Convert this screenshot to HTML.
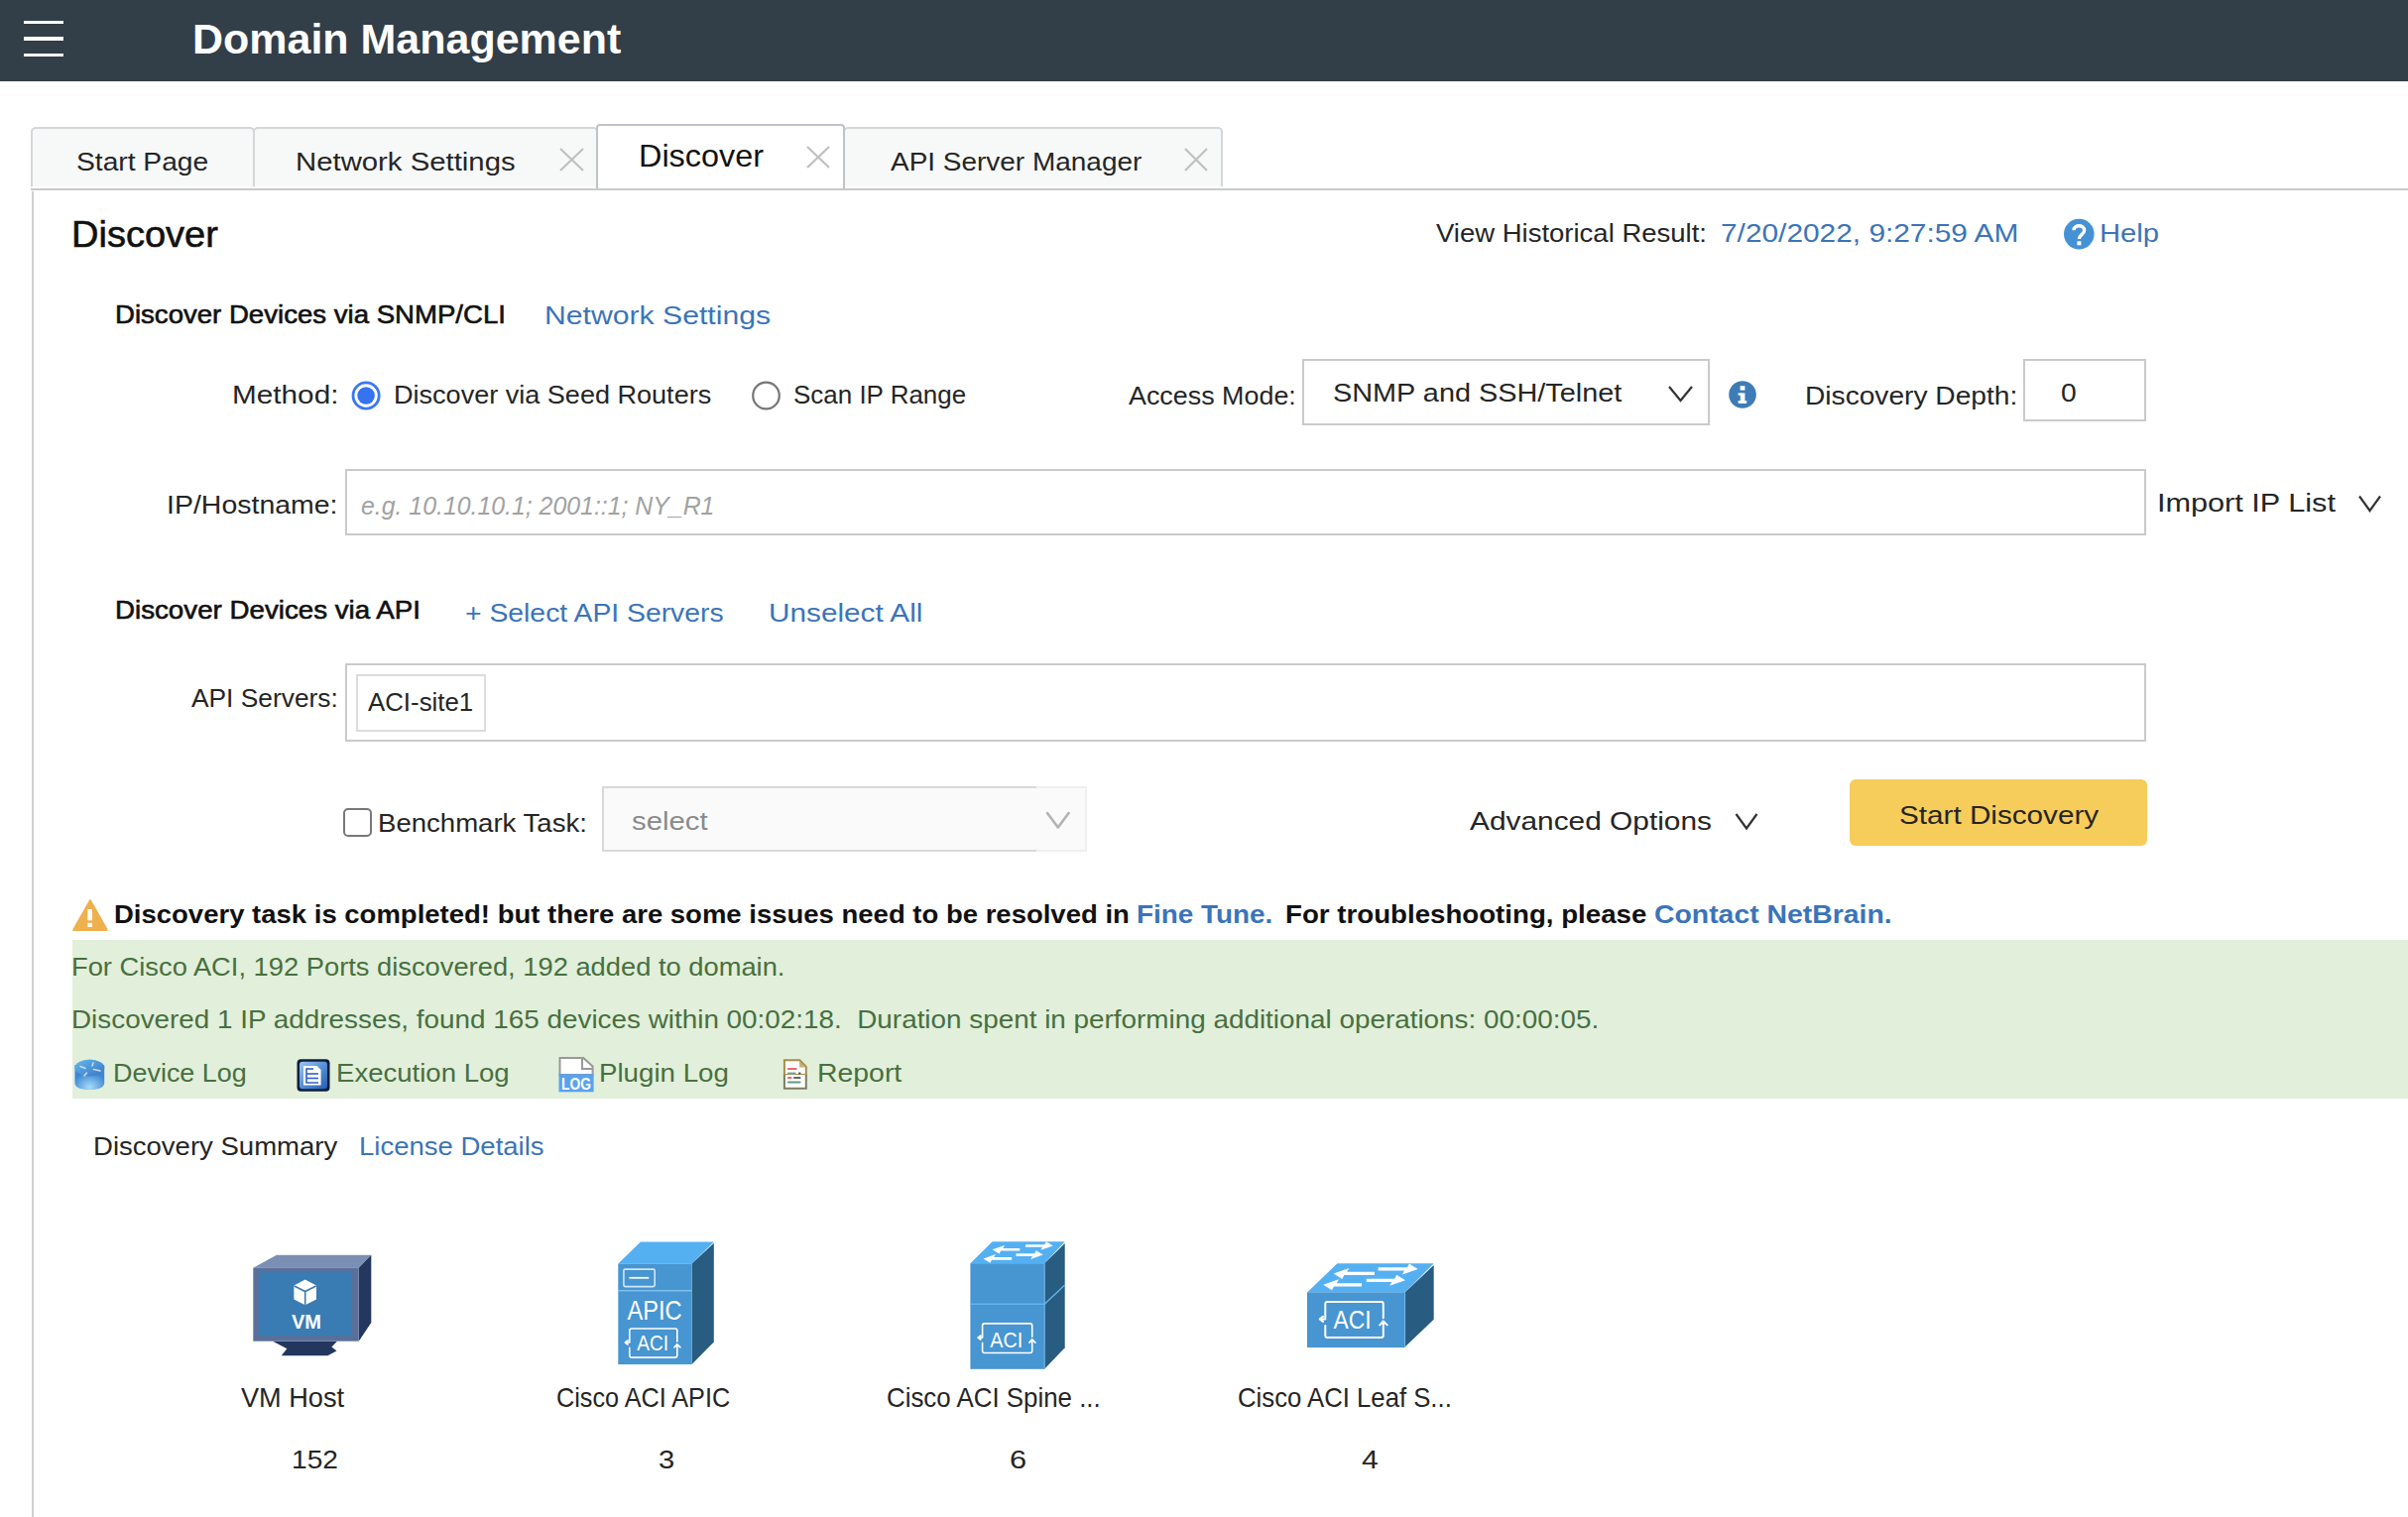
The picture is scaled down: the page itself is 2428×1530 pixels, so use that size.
<!DOCTYPE html>
<html><head><meta charset="utf-8"><style>
html,body{margin:0;padding:0;}
body{width:2428px;height:1530px;overflow:hidden;background:#fff;position:relative;font-family:"Liberation Sans",sans-serif;}
.t{position:absolute;white-space:pre;transform-origin:0 0;}
.a{position:absolute;box-sizing:border-box;}
</style></head><body>
<div class="a" style="left:0;top:0;width:2428px;height:82px;background:#323e48;"></div>
<div class="a" style="left:24px;top:20.5px;width:40px;height:3.5px;background:#fff;"></div>
<div class="a" style="left:24px;top:37px;width:40px;height:3.5px;background:#fff;"></div>
<div class="a" style="left:24px;top:53.5px;width:40px;height:3.5px;background:#fff;"></div>

<!-- tabs -->
<div class="a" style="left:31px;top:127.5px;width:226px;height:60px;background:#f7f9f8;border:2px solid #d3d7da;border-bottom:none;border-radius:5px 5px 0 0;"></div>
<div class="a" style="left:255px;top:127.5px;width:348px;height:60px;background:#f7f9f8;border:2px solid #d3d7da;border-bottom:none;border-radius:5px 5px 0 0;"></div>
<div class="a" style="left:850px;top:127.5px;width:383px;height:60px;background:#f7f9f8;border:2px solid #d3d7da;border-bottom:none;border-radius:5px 5px 0 0;"></div>
<div class="a" style="left:601px;top:125px;width:251px;height:65px;background:#fff;border:2px solid #bfc3c7;border-bottom:none;border-radius:4px 4px 0 0;"></div>
<div class="a" style="left:31px;top:189.5px;width:2397px;height:2.5px;background:#c9c9c9;"></div>
<div class="a" style="left:31.5px;top:193px;width:2px;height:1337px;background:#cfd1d3;"></div>

<!-- inputs -->
<div class="a" style="left:1313px;top:362px;width:411px;height:67px;border:2px solid #cacaca;"></div>
<div class="a" style="left:2040px;top:362px;width:124px;height:63px;border:2px solid #cacaca;"></div>
<div class="a" style="left:348px;top:473px;width:1816px;height:67px;border:2px solid #cacaca;"></div>
<div class="a" style="left:348px;top:669px;width:1816px;height:79px;border:2px solid #cacaca;"></div>
<div class="a" style="left:359px;top:680px;width:131px;height:58px;border:2px solid #dcdcdc;"></div>
<div class="a" style="left:607px;top:793px;width:489px;height:66px;border:2px solid #efefef;background:#fafafa;"></div>
<div class="a" style="left:607px;top:793px;width:438px;height:66px;border:2px solid #d9d9d9;border-right:none;"></div>
<div class="a" style="left:346px;top:815px;width:29px;height:29px;border:2.2px solid #787878;border-radius:5px;background:#fff;"></div>
<div class="a" style="left:1865px;top:786px;width:300px;height:67px;background:#f6cd5a;border-radius:6px;"></div>

<!-- green band -->
<div class="a" style="left:73px;top:948px;width:2355px;height:160px;background:#e2efdb;"></div>

<svg class="a" style="left:0;top:0;" width="2428" height="1530" viewBox="0 0 2428 1530">
  <!-- close X -->
  <g stroke="#c0c0c0" stroke-width="2.3" fill="none">
    <path d="M565 150 L588 172 M588 150 L565 172"/>
    <path d="M814 148 L836 169 M836 148 L814 169"/>
    <path d="M1195 150 L1217 172 M1217 150 L1195 172"/>
  </g>
  <!-- help icon -->
  <circle cx="2096.3" cy="236.1" r="15.3" fill="#4591d5"/>
  <path d="M2091 232.3 C2091 226.3 2101.6 226.3 2101.6 232.3 C2101.6 236.6 2096.4 236.6 2096.4 241" stroke="#fff" stroke-width="3.4" fill="none"/>
  <rect x="2094.4" y="243.3" width="4" height="4" fill="#fff"/>
  <!-- radios -->
  <circle cx="369.1" cy="399" r="13.1" fill="none" stroke="#3b78f0" stroke-width="2.8"/>
  <circle cx="369.1" cy="399" r="8.8" fill="#3574ee"/>
  <circle cx="772.5" cy="399" r="13.3" fill="none" stroke="#767676" stroke-width="2.2"/>
  <!-- chevrons -->
  <path d="M1683 390 L1694.5 404 L1706 390" stroke="#333" stroke-width="2.2" fill="none"/>
  <path d="M2379 500.5 L2389.5 515 L2400 500.5" stroke="#333" stroke-width="2.2" fill="none"/>
  <path d="M1056 820 L1066.8 834.5 L1077.6 820" stroke="#b3b3b3" stroke-width="2.6" fill="none" stroke-linecap="round" stroke-linejoin="round"/>
  <path d="M1750.5 821 L1761 835.5 L1771.5 821" stroke="#333" stroke-width="2.2" fill="none"/>
  <!-- info icon -->
  <circle cx="1757" cy="398" r="13.8" fill="#3d7cb7"/>
  <rect x="1754.6" y="389.2" width="4.8" height="4.4" fill="#fff"/>
  <rect x="1754.8" y="396.4" width="4.6" height="10.2" fill="#fff"/>
  <rect x="1752.6" y="404.2" width="8.6" height="2.6" fill="#fff"/>
  <rect x="1752.6" y="396.4" width="3" height="2.3" fill="#fff"/>
  <!-- warning -->
  <path d="M90.2 907.5 Q91 906.5 92 908 L108.5 937 Q109 939 107 939 L74.5 939 Q72.5 939 73.5 937 Z" fill="#eeb14d"/>
  <rect x="88.4" y="917" width="4.6" height="11.3" fill="#fff"/>
  <rect x="88.4" y="930.8" width="4.6" height="4.2" fill="#fff"/>
<defs>
<radialGradient id="cylg" cx="0.5" cy="0.9" r="0.6"><stop offset="0" stop-color="#a6dcfa"/><stop offset="1" stop-color="#3f86d2"/></radialGradient>
<linearGradient id="cyltop" x1="0" y1="0" x2="1" y2="1"><stop offset="0" stop-color="#62b8f0"/><stop offset="1" stop-color="#3a76c4"/></linearGradient>
<linearGradient id="execg" x1="0" y1="0" x2="1" y2="1"><stop offset="0" stop-color="#9cc6f0"/><stop offset="0.6" stop-color="#4a86d0"/><stop offset="1" stop-color="#2a5cb0"/></linearGradient>
</defs>
<path d="M75.5,1074 L75.5,1092 Q75.5,1099 90.4,1099 Q105.2,1099 105.2,1092 L105.2,1074 Z" fill="url(#cylg)"/>
<ellipse cx="90.4" cy="1077" rx="14.9" ry="8.6" fill="url(#cyltop)"/>
<g stroke="#c9dcea" stroke-width="1.6" stroke-linecap="round" fill="none"><path d="M81 1075.5 L86 1077.5"/><path d="M94 1072 L93 1075"/><path d="M94.5 1078.5 L101 1080"/><path d="M87.5 1082 L85 1085"/></g>
<rect x="299.5" y="1068.3" width="33" height="32.5" rx="4" fill="#0c1e3c"/>
<rect x="302" y="1070.8" width="28" height="27.5" rx="3" fill="url(#execg)"/>
<path d="M306 1075 L319.5 1075 L323.6 1079 L323.6 1094.5 L306 1094.5 Z" fill="#fff"/>
<g stroke="#2f62c0" stroke-width="1.6" fill="none"><path d="M309 1077.5 L309 1092 L321 1092"/><path d="M309 1083 L321 1083"/><path d="M309 1087.5 L321 1087.5"/><path d="M309 1078 L316 1078"/></g>
<path d="M564.5,1066.9 L588.3,1066.9 L597.6,1075.5 L597.6,1084 L564.5,1084 Z" fill="#fff" stroke="#999" stroke-width="2"/>
<path d="M587,1067 L587,1078 L597.6,1078" fill="none" stroke="#999" stroke-width="2"/>
<rect x="563.5" y="1083.3" width="35.1" height="18" fill="#5aa2ec"/>
<text x="581" y="1099" font-family="Liberation Sans" font-weight="700" font-size="16.5" fill="#fff" text-anchor="middle" textLength="30" lengthAdjust="spacingAndGlyphs">LOG</text>
<path d="M790.9,1069.2 L806.4,1069.2 L812.8,1075.8 L812.8,1084 L790.9,1084 Z" fill="#fff" stroke="#a88d4a" stroke-width="2"/>
<path d="M790.9,1084 L790.9,1097.8 L812.8,1097.8 L812.8,1084" fill="#fff" stroke="#7e7c64" stroke-width="2"/>
<path d="M806,1070 L806,1076.5 L812,1076.5 Z" fill="#c9b078"/>
<g stroke-width="2.2" stroke-linecap="round"><path d="M795 1078 L802.5 1078" stroke="#e86868"/><path d="M795 1082.5 L801.5 1082.5" stroke="#7aa89a"/><path d="M806 1082.5 L806.5 1082.5" stroke="#555"/><path d="M795 1087 L797.5 1087" stroke="#e86868"/><path d="M801 1087 L806.5 1087" stroke="#666"/><path d="M795 1091.5 L806.5 1091.5" stroke="#5b9a86"/></g>
<polygon points="255.3,1278.7 279.0,1265.7 374.3,1265.7 361.7,1278.7" fill="#7b8fb4" />
<polygon points="361.7,1278.7 374.3,1265.7 374.3,1334.1 361.7,1352.7" fill="#24375f" />
<polygon points="275.0,1352.7 340.0,1352.7 334.4,1358.6 339.5,1362.6 330.4,1367.3 283.8,1367.3 289.3,1360.2" fill="#22365e" />
<rect x="255.3" y="1278.7" width="106.4" height="74" fill="#5a6f9a"/>
<rect x="260.8" y="1283.1" width="93.8" height="64.1" fill="#397bb3"/>
<polygon points="307.7,1290.6 319.0,1296.5 319.0,1310.5 307.7,1316.3 296.4,1310.5 296.4,1296.5" fill="#fff" />
<path d="M296.7,1297 L307.7,1302.5 L318.7,1297 M307.7,1302.5 L307.7,1316" stroke="#397bb3" stroke-width="1.6" fill="none"/>
<text x="309" y="1340.4" font-family="Liberation Sans" font-weight="700" font-size="20.6" fill="#fff" text-anchor="middle" textLength="30" lengthAdjust="spacingAndGlyphs">VM</text>
<polygon points="623.3,1274.5 645.9,1252.4 719.8,1252.4 697.6,1274.5" fill="#55b0f2" />
<polygon points="697.6,1274.5 719.8,1253.8 719.8,1353.4 697.6,1376.1" fill="#285c80" />
<rect x="623.3" y="1274.5" width="74.3" height="101.6" fill="#4795d1"/>
<rect x="628.9" y="1280.1" width="31.3" height="17.5" rx="1.5" fill="none" stroke="#cfe6f7" stroke-width="1.6"/>
<path d="M634.4 1288.8 L654.2 1288.8" stroke="#fff" stroke-width="1.8"/>
<path d="M623.3 1301.8 L697.6 1301.8" stroke="#7cc0ee" stroke-width="1.4"/>
<text x="660" y="1331.3" font-family="Liberation Sans" font-size="27.6" fill="#fff" text-anchor="middle" textLength="55" lengthAdjust="spacingAndGlyphs">APIC</text>
<path d="M634.8,1350.5 L634.8,1342.0 Q634.8,1340.0 636.8,1340.0 L680.8,1340.0 Q682.8,1340.0 682.8,1342.0 L682.8,1353.1 M682.8,1359.2 L682.8,1367.1 Q682.8,1369.1 680.8,1369.1 L636.8,1369.1 Q634.8,1369.1 634.8,1367.1 L634.8,1359.2 M634.8,1350.5 L634.8,1354.0 L630.3,1354.0 M633.1,1351.9 L630.3,1354.0 L633.1,1356.1 M682.8,1359.2 L682.8,1355.7 M680.0,1358.9 L682.8,1355.7 L685.9,1358.9" stroke="#fff" stroke-width="1.6" fill="none" stroke-linecap="round" stroke-linejoin="round"/>
<text x="658.1" y="1362.2" font-family="Liberation Sans" font-size="21.5" fill="#fff" text-anchor="middle" textLength="31.8" lengthAdjust="spacingAndGlyphs">ACI</text>
<polygon points="978.4,1274.2 1000.6,1252.2 1073.7,1252.2 1053.2,1274.2" fill="#55b0f2" />
<polygon points="1053.2,1274.2 1073.7,1254.1 1073.7,1359.2 1053.2,1380.8" fill="#285c80" />
<rect x="978.4" y="1274.2" width="74.8" height="106.6" fill="#4795d1"/>
<path d="M978.4 1315.3 L1053.2 1315.3 L1073.7 1296.1" stroke="#62b4ee" stroke-width="1.4" fill="none"/>
<path d="M1053.2 1274.2 L1053.2 1380.8" stroke="#6cb8ee" stroke-width="1" fill="none"/>
<polygon points="1000.6,1260.3 1013.0,1256.0 1011.3,1259.0 1028.3,1259.0 1028.3,1261.6 1009.1,1261.6 1007.5,1264.6" fill="#fff" />
<polygon points="1061.8,1256.5 1054.9,1252.2 1053.3,1255.2 1034.0,1255.2 1034.0,1257.8 1051.1,1257.8 1049.4,1260.8" fill="#fff" />
<polygon points="991.5,1269.4 1003.9,1265.1 1002.2,1268.1 1020.2,1268.1 1020.2,1270.7 1000.0,1270.7 998.4,1273.7" fill="#fff" />
<polygon points="1051.7,1265.6 1044.8,1261.3 1043.2,1264.3 1024.5,1264.3 1024.5,1266.9 1041.0,1266.9 1039.3,1269.9" fill="#fff" />
<path d="M990.6,1345.6 L990.6,1336.9 Q990.6,1334.9 992.6,1334.9 L1038.7,1334.9 Q1040.7,1334.9 1040.7,1336.9 L1040.7,1348.2 M1040.7,1354.4 L1040.7,1362.5 Q1040.7,1364.5 1038.7,1364.5 L992.6,1364.5 Q990.6,1364.5 990.6,1362.5 L990.6,1354.4 M990.6,1345.6 L990.6,1349.1 L986.0,1349.1 M988.8,1347.0 L986.0,1349.1 L988.8,1351.2 M1040.7,1354.4 L1040.7,1350.9 M1037.9,1354.1 L1040.7,1350.9 L1043.9,1354.1" stroke="#fff" stroke-width="1.6" fill="none" stroke-linecap="round" stroke-linejoin="round"/>
<text x="1014.7" y="1358.8" font-family="Liberation Sans" font-size="22.2" fill="#fff" text-anchor="middle" textLength="33" lengthAdjust="spacingAndGlyphs">ACI</text>
<polygon points="1318.0,1303.4 1348.4,1274.3 1445.7,1274.3 1416.6,1303.4" fill="#55b0f2" />
<polygon points="1416.6,1303.4 1445.7,1276.0 1445.7,1330.8 1416.6,1358.5" fill="#285c80" />
<rect x="1318" y="1303.4" width="98.6" height="55.7" fill="#4795d1"/>
<path d="M1416.6 1303.4 L1416.6 1359" stroke="#6cb8ee" stroke-width="1" fill="none"/>
<polygon points="1344.6,1284.4 1360.3,1278.9 1358.2,1282.8 1386.0,1282.8 1386.0,1286.0 1355.4,1286.0 1353.3,1289.9" fill="#fff" />
<polygon points="1429.7,1279.9 1421.0,1274.4 1418.9,1278.3 1389.6,1278.3 1389.6,1281.5 1416.0,1281.5 1414.0,1285.4" fill="#fff" />
<polygon points="1334.2,1295.8 1350.0,1290.3 1347.9,1294.2 1373.0,1294.2 1373.0,1297.4 1345.0,1297.4 1343.0,1301.3" fill="#fff" />
<polygon points="1417.0,1291.3 1408.2,1285.8 1406.2,1289.7 1377.8,1289.7 1377.8,1292.9 1403.3,1292.9 1401.2,1296.8" fill="#fff" />
<path d="M1336.3,1326.1 L1336.3,1315.1 Q1336.3,1313.1 1338.3,1313.1 L1392.8,1313.1 Q1394.8,1313.1 1394.8,1315.1 L1394.8,1329.3 M1394.8,1336.9 L1394.8,1347.1 Q1394.8,1349.1 1392.8,1349.1 L1338.3,1349.1 Q1336.3,1349.1 1336.3,1347.1 L1336.3,1336.9 M1336.3,1326.1 L1336.3,1330.4 L1330.7,1330.4 M1334.1,1327.8 L1330.7,1330.4 L1334.1,1333.0 M1394.8,1336.9 L1394.8,1332.5 M1391.3,1336.4 L1394.8,1332.5 L1398.7,1336.4" stroke="#fff" stroke-width="2" fill="none" stroke-linecap="round" stroke-linejoin="round"/>
<text x="1363.6" y="1340.4" font-family="Liberation Sans" font-size="26.2" fill="#fff" text-anchor="middle" textLength="38" lengthAdjust="spacingAndGlyphs">ACI</text>
</svg>

<div id="t_title" class="t" style="left:194.01px;top:18.61px;font-size:42.15px;line-height:42.15px;font-weight:700;font-style:normal;color:#ffffff;transform:scaleX(1.0199);">Domain Management</div>
<div id="t_tab1" class="t" style="left:76.63px;top:149.55px;font-size:26.16px;line-height:26.16px;font-weight:400;font-style:normal;color:#252525;transform:scaleX(1.0777);">Start Page</div>
<div id="t_tab2" class="t" style="left:298.35px;top:149.55px;font-size:26.16px;line-height:26.16px;font-weight:400;font-style:normal;color:#252525;transform:scaleX(1.1210);">Network Settings</div>
<div id="t_tab3" class="t" style="left:644.41px;top:140.93px;font-size:31.98px;line-height:31.98px;font-weight:400;font-style:normal;color:#111111;transform:scaleX(1.0131);">Discover</div>
<div id="t_tab4" class="t" style="left:898.00px;top:149.65px;font-size:26.16px;line-height:26.16px;font-weight:400;font-style:normal;color:#252525;transform:scaleX(1.0689);">API Server Manager</div>
<div id="t_h1" class="t" style="left:71.66px;top:217.50px;font-size:37.79px;line-height:37.79px;font-weight:400;font-style:normal;color:#111111;transform:scaleX(1.0057);-webkit-text-stroke:0.6px #111;">Discover</div>
<div id="t_vhr" class="t" style="left:1448.00px;top:221.65px;font-size:26.16px;line-height:26.16px;font-weight:400;font-style:normal;color:#252525;transform:scaleX(1.0510);">View Historical Result:</div>
<div id="t_date" class="t" style="left:1735.01px;top:221.65px;font-size:26.16px;line-height:26.16px;font-weight:400;font-style:normal;color:#3b74b9;transform:scaleX(1.1412);">7/20/2022, 9:27:59 AM</div>
<div id="t_help" class="t" style="left:2116.66px;top:221.65px;font-size:26.16px;line-height:26.16px;font-weight:400;font-style:normal;color:#3b74b9;transform:scaleX(1.1158);">Help</div>
<div id="t_snmp" class="t" style="left:115.79px;top:305.29px;font-size:25.64px;line-height:25.64px;font-weight:400;font-style:normal;color:#111111;transform:scaleX(1.0764);-webkit-text-stroke:0.6px #111;">Discover Devices via SNMP/CLI</div>
<div id="t_ns" class="t" style="left:549.49px;top:304.65px;font-size:26.16px;line-height:26.16px;font-weight:400;font-style:normal;color:#3b74b9;transform:scaleX(1.1538);">Network Settings</div>
<div id="t_method" class="t" style="left:233.62px;top:384.96px;font-size:26.03px;line-height:26.03px;font-weight:400;font-style:normal;color:#252525;transform:scaleX(1.1428);">Method:</div>
<div id="t_seed" class="t" style="left:396.53px;top:384.96px;font-size:26.03px;line-height:26.03px;font-weight:400;font-style:normal;color:#252525;transform:scaleX(1.0397);">Discover via Seed Routers</div>
<div id="t_scan" class="t" style="left:800.33px;top:384.96px;font-size:26.03px;line-height:26.03px;font-weight:400;font-style:normal;color:#252525;transform:scaleX(0.9979);">Scan IP Range</div>
<div id="t_access" class="t" style="left:1137.50px;top:385.85px;font-size:26.16px;line-height:26.16px;font-weight:400;font-style:normal;color:#252525;transform:scaleX(1.0277);">Access Mode:</div>
<div id="t_snmpssh" class="t" style="left:1344.10px;top:384.29px;font-size:25.64px;line-height:25.64px;font-weight:400;font-style:normal;color:#252525;transform:scaleX(1.1258);">SNMP and SSH/Telnet</div>
<div id="t_depth" class="t" style="left:1820.15px;top:385.85px;font-size:26.16px;line-height:26.16px;font-weight:400;font-style:normal;color:#252525;transform:scaleX(1.0759);">Discovery Depth:</div>
<div id="t_zero" class="t" style="left:2078.01px;top:384.29px;font-size:25.64px;line-height:25.64px;font-weight:400;font-style:normal;color:#252525;transform:scaleX(1.1017);">0</div>
<div id="t_iphost" class="t" style="left:168.44px;top:495.85px;font-size:26.16px;line-height:26.16px;font-weight:400;font-style:normal;color:#252525;transform:scaleX(1.0888);">IP/Hostname:</div>
<div id="t_ph" class="t" style="left:363.85px;top:497.90px;font-size:25.51px;line-height:25.51px;font-weight:400;font-style:italic;color:#a2a2a2;transform:scaleX(0.9745);">e.g. 10.10.10.1; 2001::1; NY_R1</div>
<div id="t_import" class="t" style="left:2175.24px;top:494.35px;font-size:26.16px;line-height:26.16px;font-weight:400;font-style:normal;color:#252525;transform:scaleX(1.1715);">Import IP List</div>
<div id="t_api" class="t" style="left:116.38px;top:603.09px;font-size:25.64px;line-height:25.64px;font-weight:400;font-style:normal;color:#111111;transform:scaleX(1.0812);-webkit-text-stroke:0.6px #111;">Discover Devices via API</div>
<div id="t_selapi" class="t" style="left:468.72px;top:604.85px;font-size:26.16px;line-height:26.16px;font-weight:400;font-style:normal;color:#3b74b9;transform:scaleX(1.0833);">+ Select API Servers</div>
<div id="t_unsel" class="t" style="left:775.17px;top:604.85px;font-size:26.16px;line-height:26.16px;font-weight:400;font-style:normal;color:#3b74b9;transform:scaleX(1.1372);">Unselect All</div>
<div id="t_apisrv" class="t" style="left:193.40px;top:691.15px;font-size:26.16px;line-height:26.16px;font-weight:400;font-style:normal;color:#252525;transform:scaleX(1.0066);">API Servers:</div>
<div id="t_chip" class="t" style="left:371.00px;top:695.45px;font-size:26.16px;line-height:26.16px;font-weight:400;font-style:normal;color:#252525;transform:scaleX(0.9870);">ACI-site1</div>
<div id="t_bench" class="t" style="left:381.49px;top:816.85px;font-size:26.16px;line-height:26.16px;font-weight:400;font-style:normal;color:#252525;transform:scaleX(1.0537);">Benchmark Task:</div>
<div id="t_select" class="t" style="left:637.07px;top:816.40px;font-size:25.51px;line-height:25.51px;font-weight:400;font-style:normal;color:#8a8a8a;transform:scaleX(1.1498);">select</div>
<div id="t_adv" class="t" style="left:1482.00px;top:815.35px;font-size:26.16px;line-height:26.16px;font-weight:400;font-style:normal;color:#252525;transform:scaleX(1.1415);">Advanced Options</div>
<div id="t_start" class="t" style="left:1915.16px;top:809.25px;font-size:26.16px;line-height:26.16px;font-weight:400;font-style:normal;color:#252525;transform:scaleX(1.1346);">Start Discovery</div>
<div id="t_warn1" class="t" style="left:115.21px;top:909.15px;font-size:26.16px;line-height:26.16px;font-weight:700;font-style:normal;color:#111111;transform:scaleX(1.0512);">Discovery task is completed! but there are some issues need to be resolved in</div>
<div id="t_fine" class="t" style="left:1146.19px;top:909.15px;font-size:26.16px;line-height:26.16px;font-weight:700;font-style:normal;color:#3b74b9;transform:scaleX(1.0662);">Fine Tune.</div>
<div id="t_trouble" class="t" style="left:1295.90px;top:909.15px;font-size:26.16px;line-height:26.16px;font-weight:700;font-style:normal;color:#111111;transform:scaleX(1.0579);">For troubleshooting, please</div>
<div id="t_contact" class="t" style="left:1667.86px;top:909.15px;font-size:26.16px;line-height:26.16px;font-weight:700;font-style:normal;color:#3b74b9;transform:scaleX(1.0847);">Contact NetBrain.</div>
<div id="t_g1" class="t" style="left:72.32px;top:962.35px;font-size:26.16px;line-height:26.16px;font-weight:400;font-style:normal;color:#47703f;transform:scaleX(1.0439);">For Cisco ACI, 192 Ports discovered, 192 added to domain.</div>
<div id="t_g2" class="t" style="left:72.27px;top:1014.85px;font-size:26.16px;line-height:26.16px;font-weight:400;font-style:normal;color:#47703f;transform:scaleX(1.0649);">Discovered 1 IP addresses, found 165 devices within 00:02:18. &nbsp;Duration spent in performing additional operations: 00:00:05.</div>
<div id="t_devlog" class="t" style="left:114.14px;top:1068.85px;font-size:26.16px;line-height:26.16px;font-weight:400;font-style:normal;color:#47703f;transform:scaleX(1.0299);">Device Log</div>
<div id="t_execlog" class="t" style="left:338.59px;top:1068.85px;font-size:26.16px;line-height:26.16px;font-weight:400;font-style:normal;color:#47703f;transform:scaleX(1.0535);">Execution Log</div>
<div id="t_pluglog" class="t" style="left:604.08px;top:1068.85px;font-size:26.16px;line-height:26.16px;font-weight:400;font-style:normal;color:#47703f;transform:scaleX(1.0587);">Plugin Log</div>
<div id="t_report" class="t" style="left:824.13px;top:1068.85px;font-size:26.16px;line-height:26.16px;font-weight:400;font-style:normal;color:#47703f;transform:scaleX(1.0857);">Report</div>
<div id="t_summary" class="t" style="left:94.40px;top:1144.29px;font-size:25.64px;line-height:25.64px;font-weight:400;font-style:normal;color:#252525;transform:scaleX(1.0743);">Discovery Summary</div>
<div id="t_license" class="t" style="left:362.20px;top:1144.29px;font-size:25.64px;line-height:25.64px;font-weight:400;font-style:normal;color:#3b74b9;transform:scaleX(1.0736);">License Details</div>
<div id="t_vmhost" class="t" style="left:243.00px;top:1397.09px;font-size:26.82px;line-height:26.82px;font-weight:400;font-style:normal;color:#252525;transform:scaleX(1.0123);">VM Host</div>
<div id="t_apic" class="t" style="left:561.24px;top:1397.09px;font-size:26.82px;line-height:26.82px;font-weight:400;font-style:normal;color:#252525;transform:scaleX(0.9400);">Cisco ACI APIC</div>
<div id="t_spine" class="t" style="left:893.91px;top:1397.09px;font-size:26.82px;line-height:26.82px;font-weight:400;font-style:normal;color:#252525;transform:scaleX(0.9650);">Cisco ACI Spine ...</div>
<div id="t_leaf" class="t" style="left:1247.71px;top:1397.09px;font-size:26.82px;line-height:26.82px;font-weight:400;font-style:normal;color:#252525;transform:scaleX(0.9590);">Cisco ACI Leaf S...</div>
<div id="t_152" class="t" style="left:293.89px;top:1460.07px;font-size:25.90px;line-height:25.90px;font-weight:400;font-style:normal;color:#252525;transform:scaleX(1.0854);">152</div>
<div id="t_3" class="t" style="left:663.98px;top:1460.07px;font-size:25.90px;line-height:25.90px;font-weight:400;font-style:normal;color:#252525;transform:scaleX(1.1261);">3</div>
<div id="t_6" class="t" style="left:1018.16px;top:1460.07px;font-size:25.90px;line-height:25.90px;font-weight:400;font-style:normal;color:#252525;transform:scaleX(1.1873);">6</div>
<div id="t_4" class="t" style="left:1373.00px;top:1460.07px;font-size:25.90px;line-height:25.90px;font-weight:400;font-style:normal;color:#252525;transform:scaleX(1.1658);">4</div>
</body></html>
